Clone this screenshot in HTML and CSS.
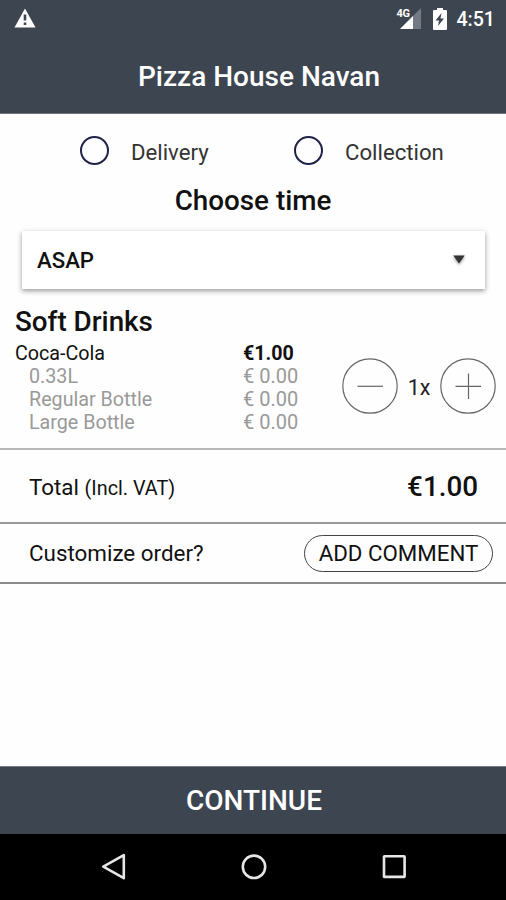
FILE: index.html
```
<!DOCTYPE html>
<html lang="en">
<head>
<meta charset="utf-8">
<title>Pizza House Navan</title>
<link rel="stylesheet" href="styles.css">
</head>
<body>
<header class="top">
  <div class="status">
    <svg class="warn" width="22" height="20" viewBox="0 0 22 20"><path d="M11 0.5L21.5 19.5H0.5Z" fill="#fff"/><path d="M11 6.5V12.5M11 14.5V17" stroke="#3d4551" stroke-width="2.6"/></svg>
    <div class="status-right">
      <span class="net">4G</span>
      <svg class="signal" width="21" height="21" viewBox="0 0 21 21"><path d="M21 0V21H0Z" fill="#747a83"/><path d="M13 8V21H0Z" fill="#fff"/></svg>
      <svg class="battery" width="14" height="22" viewBox="0 0 14 22"><path d="M4 0H10V2H13Q14 2 14 3V21Q14 22 13 22H1Q0 22 0 21V3Q0 2 1 2H4Z" fill="#fff"/><path d="M8.5 5L2.5 12.5H6L5 18L11 10.5H7.5Z" fill="#3d4551"/></svg>
      <span class="clock">4:51</span>
    </div>
  </div>
  <h1 class="title">Pizza House Navan</h1>
</header>
<main class="content">
  <div class="options">
    <label class="option"><i class="radio"></i><span>Delivery</span></label>
    <label class="option"><i class="radio"></i><span>Collection</span></label>
  </div>
  <h2 class="choose">Choose time</h2>
  <div class="select">
    <span>ASAP</span>
    <svg class="caret" width="12" height="9" viewBox="0 0 12 9"><path d="M0.3 0.5H11.7L6 8.5Z" fill="#333"/></svg>
  </div>
  <section class="order">
    <div class="items">
      <h2 class="category">Soft Drinks</h2>
      <div class="line main"><span class="name">Coca-Cola</span><span class="price">€1.00</span></div>
      <div class="line extra"><span class="name">0.33L</span><span class="price">€ 0.00</span></div>
      <div class="line extra"><span class="name">Regular Bottle</span><span class="price">€ 0.00</span></div>
      <div class="line extra"><span class="name">Large Bottle</span><span class="price">€ 0.00</span></div>
    </div>
    <div class="stepper">
      <svg width="56" height="56" viewBox="0 0 56 56"><circle cx="28" cy="28" r="27.2"/><path d="M15.5 28.3H41"/></svg>
      <span class="qty">1x</span>
      <svg width="56" height="56" viewBox="0 0 56 56"><circle cx="28" cy="28" r="27.2"/><path d="M15.5 28.3H41M28.5 15.5V41"/></svg>
    </div>
  </section>
  <section class="total">
    <span class="total-label">Total <small>(Incl. VAT)</small></span>
    <span class="sum">€1.00</span>
  </section>
  <section class="custom">
    <span class="custom-label">Customize order?</span>
    <button class="comment">ADD COMMENT</button>
  </section>
</main>
<button class="continue">CONTINUE</button>
<nav class="nav">
  <svg width="26" height="28" viewBox="0 0 26 28"><path d="M2.3 13.7L22.8 2.2V25.2Z"/></svg>
  <svg width="26" height="28" viewBox="0 0 26 28"><circle cx="13" cy="13.8" r="11.2"/></svg>
  <svg width="26" height="28" viewBox="0 0 26 28"><rect x="3" y="3.3" width="20.6" height="20.6" rx="0.5"/></svg>
</nav>
</body>
</html>
```
FILE: styles.css
```
* { box-sizing: border-box; }
body {
  margin: 0;
  width: 506px;
  height: 900px;
  display: flex;
  flex-direction: column;
  background: #fefefe;
  color: #111;
  font-family: Roboto, "Liberation Sans", sans-serif;
  overflow: hidden;
}
h1, h2 { margin: 0; font-weight: 500; }
button { border: 0; padding: 0; background: none; font: inherit; color: inherit; }
.top { height: 114px; background: #3d4551; color: #fff; border-bottom: 1px solid #6d737c; }
.status { height: 38px; display: flex; justify-content: space-between; padding: 8px 11px 0 14px; }
.status-right { display: flex; }
.net { font-size: 11px; font-weight: 700; line-height: 12px; margin-right: -9px; letter-spacing: -0.5px; }
.signal { margin-right: 12px; }
.battery { margin-right: 9px; }
.clock { font-size: 19.6px; font-weight: 500; line-height: 23px; }
.title { height: 76px; line-height: 78px; font-size: 28px; text-align: center; padding-left: 12px; }
.content { flex: 1; }
.options { height: 74px; display: flex; padding-left: 80px; }
.option { display: flex; align-items: center; width: 214px; gap: 22px; font-size: 22.2px; color: #333; padding-bottom: 1px; }
.option + .option { padding-left: 1px; }
.option span { padding-top: 2px; }
.radio { width: 29px; height: 29px; border: 2px solid #1f2145; border-radius: 50%; }
.choose { height: 26px; line-height: 26px; font-size: 27.8px; text-align: center; }
.select {
  margin: 17px 21px 0 22px;
  height: 58px;
  padding: 0 20px 0 15px;
  display: flex;
  align-items: center;
  justify-content: space-between;
  background: #fff;
  box-shadow: 0 2px 5px rgba(0, 0, 0, 0.4);
  font-size: 22.2px;
  font-weight: 500;
}
.caret { margin-bottom: 2px; filter: drop-shadow(0 1px 1.5px rgba(0, 0, 0, 0.5)); }
.order { height: 161px; border-bottom: 2px solid #b8b8b8; display: flex; }
.items { width: 342px; padding: 16px 0 0 15px; }
.category { height: 32px; line-height: 33px; font-size: 27.8px; margin-bottom: 5px; }
.line { display: flex; height: 23px; line-height: 23px; font-size: 19.7px; }
.name { width: 228px; }
.main .price { font-weight: 700; }
.extra { color: #999; }
.extra .name { padding-left: 14px; }
.extra .price { font-size: 20px; }
.stepper { display: flex; align-items: center; height: 56px; margin-top: 69px; }
.stepper svg { fill: none; stroke: #666; stroke-width: 1.2; }
.qty { width: 42px; padding-top: 2px; text-align: center; font-size: 21.5px; color: #222; }
.total { height: 74px; border-bottom: 2px solid #999; display: flex; align-items: center; justify-content: space-between; padding: 1px 28px 0 29px; font-size: 22.4px; }
.total-label small { font-size: 19.8px; }
.sum { font-size: 27.8px; font-weight: 500; }
.custom { height: 60px; border-bottom: 2px solid #8c8c8c; display: flex; align-items: center; justify-content: space-between; padding: 0 13px 0 29px; font-size: 22.4px; }
.comment { width: 189px; height: 37px; border: 1px solid #444; border-radius: 19px; font-size: 22.3px; }
.continue { height: 68px; background: #3d4551; color: #fff; font-size: 28px; font-weight: 500; border-top: 1px solid #737982; padding-left: 2px; }
.nav { height: 66px; background: #000; display: flex; justify-content: space-between; align-items: center; padding: 0 99px 0 101px; }
.nav svg { fill: none; stroke: #e6e6e6; stroke-width: 2.6; stroke-linejoin: round; }
```
